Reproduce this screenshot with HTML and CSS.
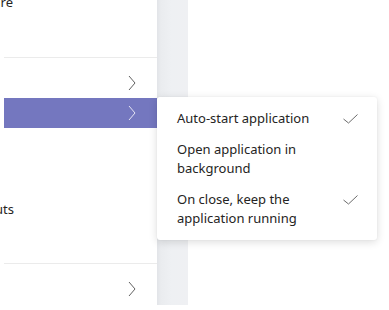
FILE: index.html
```html
<!DOCTYPE html>
<html>
<head>
<meta charset="utf-8">
<link rel="stylesheet" href="styles.css">
</head>
<body>
<div class="page">
  <nav class="panel">
    <div class="cut-text title">Software</div>
    <div class="sep sep-top"></div>
    <div class="row row-a">
      <span class="label"></span>
      <svg class="chev" width="8" height="16" viewBox="0 0 8 16"><polyline points="1,1 7,8 1,15" fill="none" stroke="currentColor" stroke-width="1"/></svg>
    </div>
    <div class="row row-active">
      <span class="label"></span>
      <svg class="chev" width="8" height="16" viewBox="0 0 8 16"><polyline points="1,1 7,8 1,15" fill="none" stroke="currentColor" stroke-width="1"/></svg>
    </div>
    <div class="row row-text">
      <div class="cut-text shortcuts">Keyboard shortcuts</div>
    </div>
    <div class="sep sep-bottom"></div>
    <div class="row row-last">
      <span class="label"></span>
      <svg class="chev" width="8" height="16" viewBox="0 0 8 16"><polyline points="1,1 7,8 1,15" fill="none" stroke="currentColor" stroke-width="1"/></svg>
    </div>
  </nav>
  <div class="strip"></div>
  <div class="main"></div>
</div>
<div class="menu">
  <div class="item">
    <span class="item-text">Auto-start application</span>
    <svg class="check" width="15" height="10" viewBox="0 0 15 10"><polyline points="0.5,5 5.5,9 14.5,0.5" fill="none" stroke="currentColor" stroke-width="1"/></svg>
  </div>
  <div class="item">
    <span class="item-text">Open application in<br>background</span>
  </div>
  <div class="item">
    <span class="item-text">On close, keep the<br>application running</span>
    <svg class="check" width="15" height="10" viewBox="0 0 15 10"><polyline points="0.5,5 5.5,9 14.5,0.5" fill="none" stroke="currentColor" stroke-width="1"/></svg>
  </div>
</div>
</body>
</html>
```
FILE: styles.css
```css
html, body {
  margin: 0;
  padding: 0;
  background: #ffffff;
  overflow: hidden;
  font-family: "Noto Sans", "Open Sans", sans-serif;
  font-size: 13px;
  color: #252423;
}
.page {
  display: flex;
  width: 389px;
  height: 310px;
}
.panel {
  width: 157px;
  flex: none;
  display: flex;
  flex-direction: column;
  background: #ffffff;
}
.cut-text {
  display: flex;
  justify-content: flex-end;
  white-space: nowrap;
  line-height: 19px;
}
.title {
  width: 13px;
  margin-top: -7px;
}
.shortcuts {
  width: 14px;
}
.sep {
  height: 1px;
  margin-left: 4px;
  background: #ebebeb;
}
.sep-top {
  margin-top: 45px;
}
.row {
  height: 30px;
  margin-left: 4px;
  display: flex;
  align-items: center;
  justify-content: space-between;
  padding-right: 21px;
  color: #616161;
}
.row-a {
  margin-top: 10px;
}
.row-active {
  background: #7477bf;
  color: #e4e4f4;
}
.row-text {
  margin-top: 66px;
  margin-left: 0;
  color: #252423;
}
.sep-bottom {
  margin-top: 39px;
}
.row-last {
  margin-top: 10px;
}
.chev {
  display: block;
}
.strip {
  width: 31px;
  height: 305px;
  flex: none;
  background: linear-gradient(to right, #e2e4e8 0px, #eaecef 4px, #eef0f3 14px, #eff0f3 100%);
}
.main {
  flex: 1;
}
.menu {
  position: absolute;
  left: 157px;
  top: 97px;
  width: 220px;
  padding: 6px 0;
  background: #ffffff;
  border-radius: 3px;
  box-shadow: 0 2px 8px rgba(0, 0, 0, 0.14), 0 0 2px rgba(0, 0, 0, 0.06);
}
.item {
  display: flex;
  justify-content: space-between;
  align-items: flex-start;
  padding: 6px 19px 6px 20px;
  line-height: 19px;
  color: #252423;
}
.check {
  display: block;
  margin-top: 5px;
  color: #6b6b6b;
}
```
